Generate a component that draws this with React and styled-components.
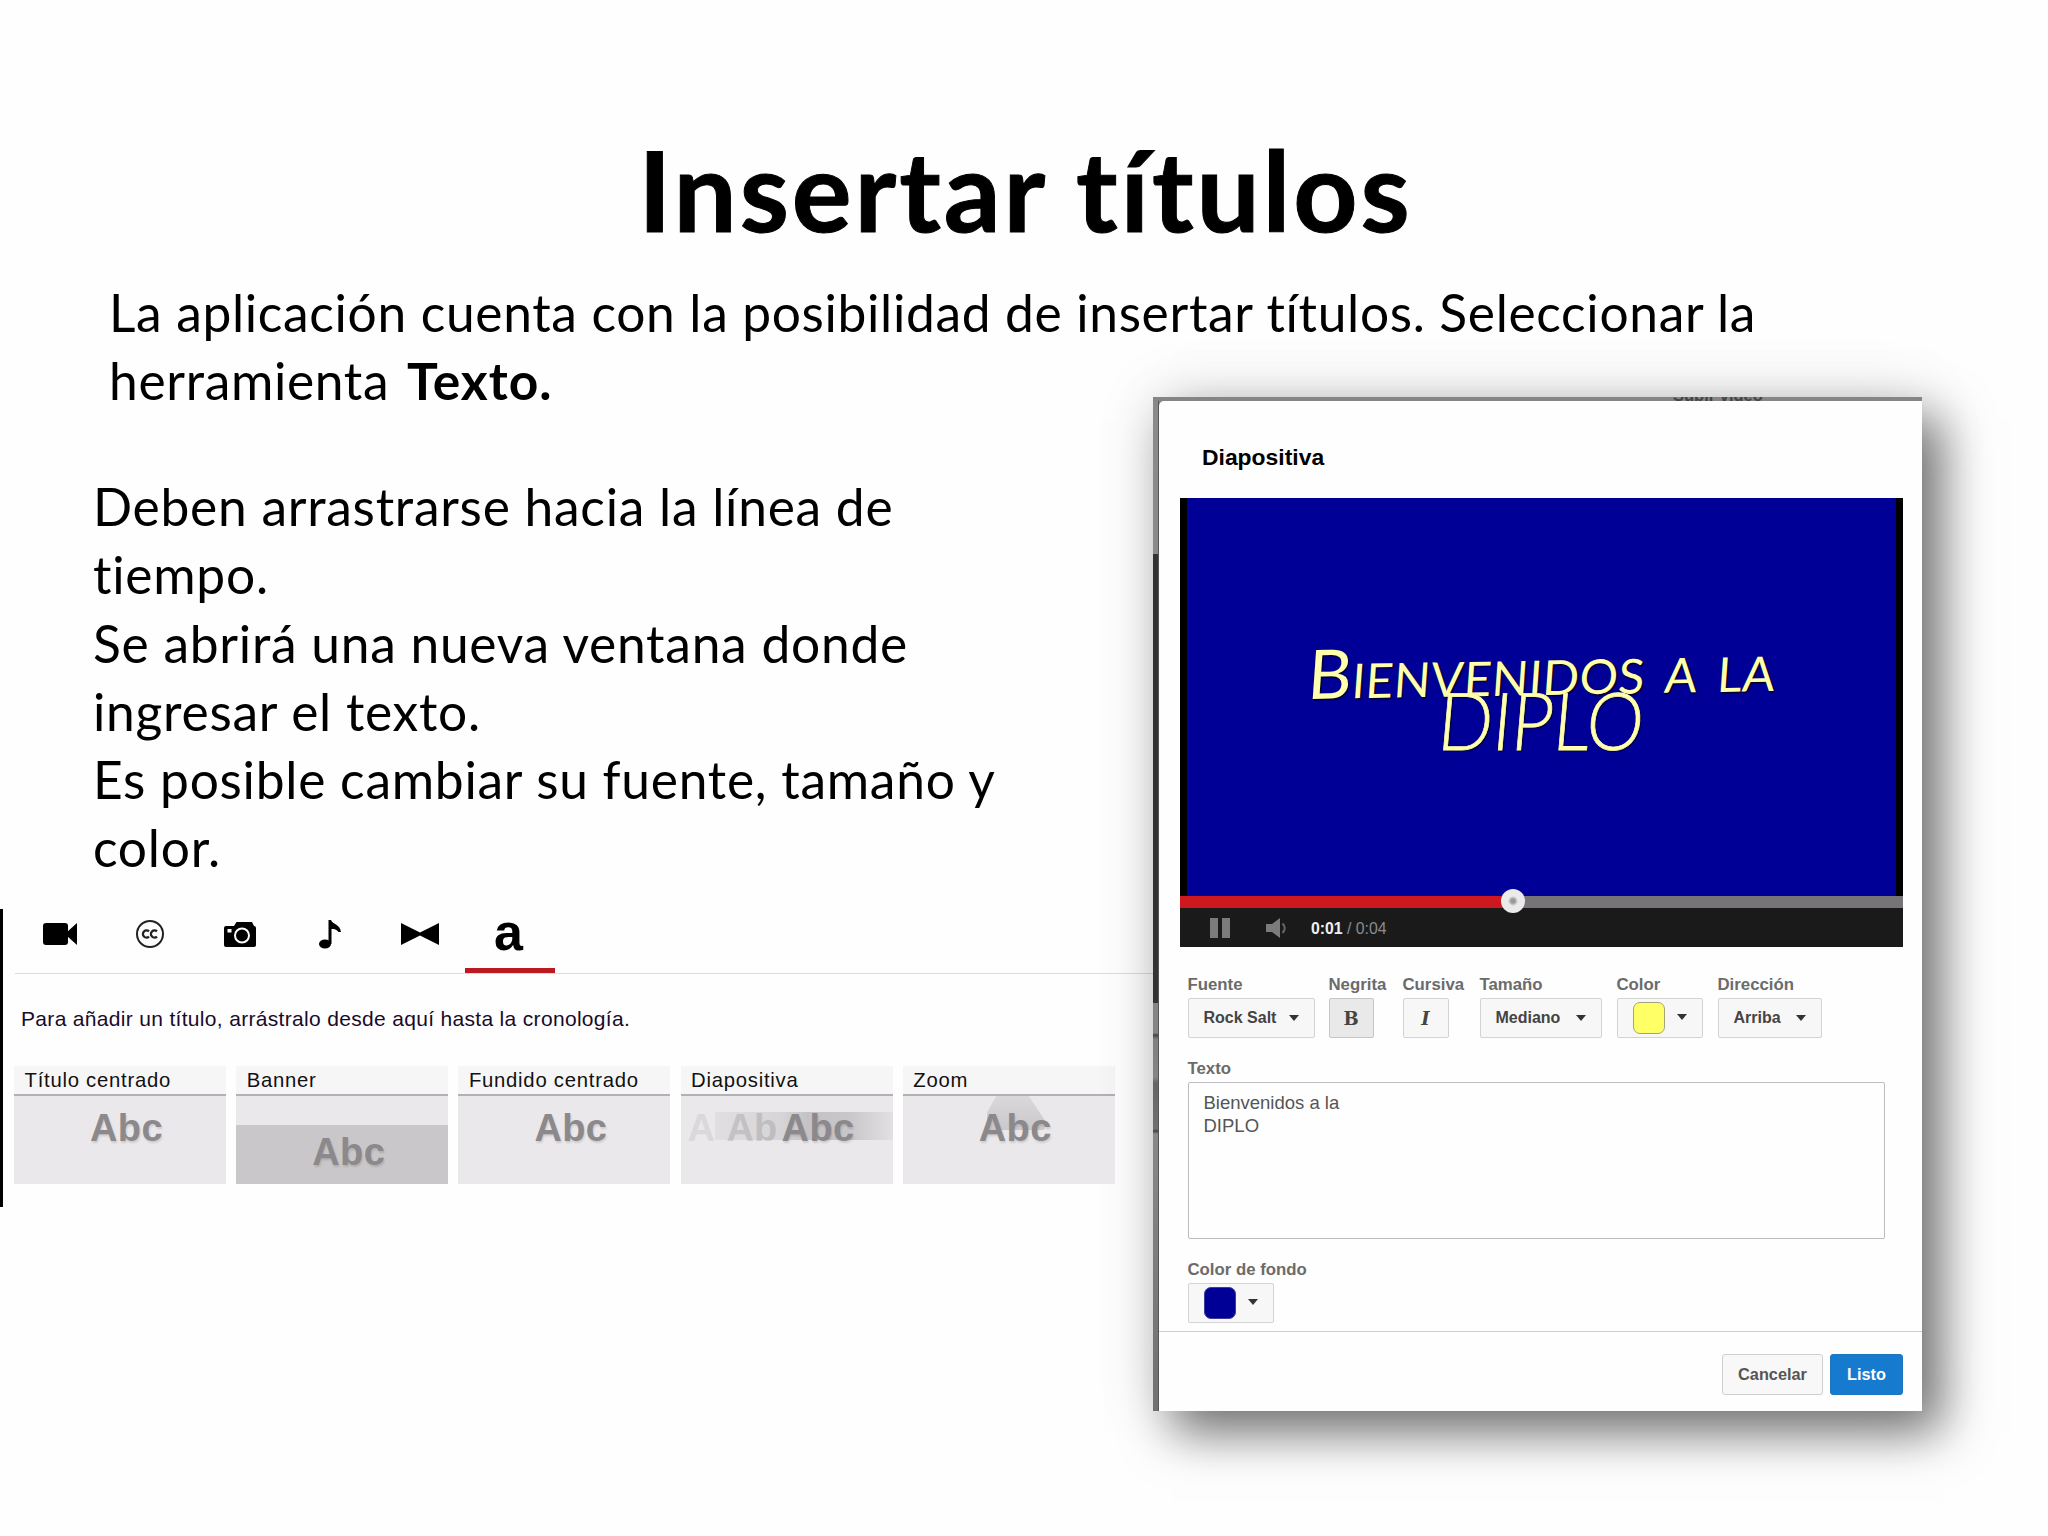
import React, { useState } from "react";
import styled, { createGlobalStyle } from "styled-components";

const tabs = ["video", "cc", "photo", "music", "transition", "text"];

const presets = [
  { name: "Título centrado", kind: "plain" },
  { name: "Banner", kind: "banner" },
  { name: "Fundido centrado", kind: "plain" },
  { name: "Diapositiva", kind: "slide" },
  { name: "Zoom", kind: "zoom" },
];

const TabIcon = ({ name }) => {
  switch (name) {
    case "video":
      return (
        <svg width="34" height="22" viewBox="0 0 34 22">
          <rect x="0" y="0" width="25" height="22" rx="3" />
          <path d="M24 9 L34 0 V22 L24 13 Z" />
        </svg>
      );
    case "cc":
      return (
        <svg width="30" height="30" viewBox="0 0 30 30" fill="none" stroke="#222">
          <circle cx="15" cy="15" r="13" strokeWidth="2" />
          <path d="M14 12.4 A3.6 3.6 0 1 0 14 17.6" strokeWidth="2.3" />
          <path d="M22 12.4 A3.6 3.6 0 1 0 22 17.6" strokeWidth="2.3" />
        </svg>
      );
    case "photo":
      return (
        <svg width="32" height="25" viewBox="0 0 32 25">
          <path d="M2 4 H10 L12.500 0 H28 L30 4 Q32 4 32 6 V23 Q32 25 30 25 H2 Q0 25 0 23 V6 Q0 4 2 4 Z" />
          <circle cx="18" cy="13.500" r="7" fill="none" stroke="#fff" strokeWidth="2" />
          <rect x="3.500" y="7" width="4" height="3.500" fill="#fff" />
        </svg>
      );
    case "music":
      return (
        <svg width="22" height="29" viewBox="0 0 22 29">
          <ellipse cx="6" cy="24" rx="6" ry="4.600" />
          <path d="M9.500 24 V0 H12 C13 4 21 4 22 12 H19.500 C18 9.500 15 9 12.500 9 V24 Z" />
        </svg>
      );
    case "transition":
      return (
        <svg width="38" height="22" viewBox="0 0 38 22">
          <path d="M0 0 L19 9.500 L38 0 V22 L19 12.500 L0 22 Z" />
        </svg>
      );
    default:
      return <Letter>a</Letter>;
  }
};

const Preview = ({ kind }) => (
  <PreviewBox $kind={kind}>
    {kind === "slide" && (
      <>
        <Streak />
        <Ghost $left={7} $opacity={0.1}>A</Ghost>
        <Ghost $left={46} $opacity={0.18}>Ab</Ghost>
      </>
    )}
    {kind === "zoom" && <Beam />}
    <Abc $kind={kind}>Abc</Abc>
  </PreviewBox>
);

const App = () => {
  const [active, setActive] = useState("text");
  const [text, setText] = useState("Bienvenidos a la\nDIPLO");
  const [bold, setBold] = useState(true);

  return (
    <Slide>
      <GlobalStyle />
      <Heading>Insertar títulos</Heading>
      <Intro>
        La aplicación cuenta con la posibilidad de insertar títulos. Seleccionar la
        <br />
        herramienta <b>Texto.</b>
      </Intro>

      <Columns>
        <Left>
          <Steps>
            Deben arrastrarse hacia la línea de
            <br />
            tiempo.
            <br />
            Se abrirá una nueva ventana donde
            <br />
            ingresar el texto.
            <br />
            Es posible cambiar su fuente, tamaño y
            <br />
            color.
          </Steps>

          {/* title presets */}
          <Panel>
            <TabBar>
              {tabs.map((tab) => (
                <Tab key={tab} $active={tab === active} onClick={() => setActive(tab)}>
                  <TabIcon name={tab} />
                </Tab>
              ))}
            </TabBar>
            <Hint>Para añadir un título, arrástralo desde aquí hasta la cronología.</Hint>
            <Cards>
              {presets.map((preset) => (
                <Card key={preset.name}>
                  <CardName>{preset.name}</CardName>
                  <Preview kind={preset.kind} />
                </Card>
              ))}
            </Cards>
          </Panel>
        </Left>

        <Window>
          {/* the page behind shows only as a thin strip */}
          <Backdrop>
            <BackdropText>Subir vídeo</BackdropText>
          </Backdrop>
          <WindowRow>
            <Edge />
            <Dialog>
              <DialogTitle>Diapositiva</DialogTitle>
              <Player>
                <Screen>
                  <Line1>Bienvenidos a la</Line1>
                  <Line2>DIPLO</Line2>
                </Screen>
                <Progress>
                  <Played />
                  <Knob />
                </Progress>
                <Controls>
                  <svg width="20" height="20" viewBox="0 0 20 20" fill="#7b7b7b">
                    <rect width="8" height="20" />
                    <rect x="12" width="8" height="20" />
                  </svg>
                  <svg width="21" height="20" viewBox="0 0 21 20" fill="#7b7b7b">
                    <path d="M0 6 H6 L14 0 V20 L6 14 H0 Z" />
                    <path d="M16.500 5.500 Q21 10 16.500 15" fill="none" stroke="#666" strokeWidth="2" />
                  </svg>
                  <Time>
                    <b>0:01</b> / 0:04
                  </Time>
                </Controls>
              </Player>

              <Form>
                <Fields>
                  <Field $width={141}>
                    <Label>Fuente</Label>
                    <Button $width={127}>
                      Rock Salt <Caret />
                    </Button>
                  </Field>
                  <Field $width={74}>
                    <Label>Negrita</Label>
                    <Button $width={45} $pressed={bold} $glyph onClick={() => setBold(!bold)}>
                      B
                    </Button>
                  </Field>
                  <Field $width={77}>
                    <Label>Cursiva</Label>
                    <Button $width={46} $glyph>
                      <i>I</i>
                    </Button>
                  </Field>
                  <Field $width={137}>
                    <Label>Tamaño</Label>
                    <Button $width={122}>
                      Mediano <Caret />
                    </Button>
                  </Field>
                  <Field $width={101}>
                    <Label>Color</Label>
                    <Button $width={86}>
                      <Swatch $color="#ffff66" $edge="#a5a37a" />
                      <Caret $raised />
                    </Button>
                  </Field>
                  <Field $width={104}>
                    <Label>Dirección</Label>
                    <Button $width={104}>
                      Arriba <Caret />
                    </Button>
                  </Field>
                </Fields>
                <Label>Texto</Label>
                <TextArea value={text} onChange={(e) => setText(e.target.value)} spellCheck={false} />
                <Label>Color de fondo</Label>
                <Button $width={86}>
                  <Swatch $color="#000096" $edge="#3c3c9c" />
                  <Caret $raised />
                </Button>
              </Form>

              <Footer>
                <Action $width={101}>Cancelar</Action>
                <Action $width={73} $primary>
                  Listo
                </Action>
              </Footer>
            </Dialog>
          </WindowRow>
        </Window>
      </Columns>
    </Slide>
  );
};

const GlobalStyle = createGlobalStyle`
  * {
    box-sizing: border-box;
  }
  body {
    margin: 0;
    background: #fefefe;
  }
  button, textarea {
    margin: 0;
    padding: 0;
    border: none;
    border-radius: 0;
    background: none;
    font-family: inherit;
  }
`;

const Slide = styled.div`
  width: 2048px;
  height: 1536px;
  padding-top: 122px;
  overflow: hidden;
  color: #000;
  background: #fefefe;
  font-family: "Liberation Sans", Arial, sans-serif;
`;
const Heading = styled.h1`
  margin: 0;
  padding-left: 3px;
  text-align: center;
  font-family: Lato, sans-serif;
  font-size: 112px;
  font-weight: 700;
  letter-spacing: 2.9px;
  line-height: 134px;
  height: 156px;
  font-variant-ligatures: none;
  -webkit-text-stroke: 1px #000;
`;
const Intro = styled.p`
  margin: 0;
  padding-left: 109px;
  height: 136px;
  white-space: nowrap;
  font-family: Lato, sans-serif;
  font-size: 51.5px;
  letter-spacing: 0.66px;
  line-height: 68px;
  font-variant-ligatures: none;

  b {
    letter-spacing: 1px;
    margin-left: 4px;
  }
`;
const Columns = styled.div`
  display: flex;
  align-items: flex-start;
`;
const Left = styled.div`
  width: 1153px;
  flex: none;
  padding-top: 58px;
`;
const Steps = styled.p`
  margin: 0;
  padding-left: 93px;
  height: 437px;
  white-space: nowrap;
  font-family: Lato, sans-serif;
  font-size: 51.5px;
  letter-spacing: 0.74px;
  line-height: 68.3px;
  font-variant-ligatures: none;
`;

const Panel = styled.section`
  height: 298px;
  border-left: 3.5px solid #000;
`;
const TabBar = styled.div`
  display: flex;
  height: 65px;
  margin-left: 12px;
  border-bottom: 1px solid #dcdcdc;
`;
const Tab = styled.button`
  display: flex;
  align-items: center;
  justify-content: center;
  width: 90px;
  height: 64px;
  padding-bottom: 9px;
  border-bottom: ${(props) => (props.$active ? "5px solid #b9191f" : "5px solid transparent")};
`;
const Letter = styled.span`
  margin-top: -4px;
  margin-left: -3px;
  font-size: 52px;
  font-weight: 700;
  line-height: 60px;
`;
const Hint = styled.div`
  padding: 33px 0 0 18px;
  height: 92px;
  white-space: nowrap;
  font-size: 21px;
  letter-spacing: 0.32px;
  line-height: 24px;
  color: #1a0a2a;
`;
const Cards = styled.div`
  display: flex;
  gap: 10.2px;
  padding-left: 11px;
`;
const Card = styled.div`
  width: 212px;
  height: 118px;
`;
const CardName = styled.div`
  height: 30px;
  padding: 1px 0 0 10.5px;
  border-bottom: 2px solid #b3b1b3;
  background: #f7f6f7;
  white-space: nowrap;
  font-size: 20.3px;
  letter-spacing: 0.75px;
  line-height: 26px;
  color: #111;
`;
const PreviewBox = styled.div`
  position: relative;
  height: 88px;
  overflow: hidden;
  background: ${(props) =>
    props.$kind === "banner" ? "linear-gradient(#eae8ea 29px, #c9c7c9 29px)" : "#eae8ea"};
`;
const Abc = styled.div`
  position: relative;
  padding-top: ${(props) => (props.$kind === "banner" ? 34 : 10)}px;
  padding-left: ${(props) => (props.$kind === "slide" ? 101 : 76)}px;
  font-size: 38px;
  font-weight: 700;
  letter-spacing: 0.4px;
  line-height: 44px;
  color: #8b898b;
  text-shadow: 1px 2px 2px rgba(0, 0, 0, 0.12);
`;
const Ghost = styled.span`
  position: absolute;
  top: 10px;
  left: ${(props) => props.$left}px;
  opacity: ${(props) => props.$opacity};
  font-size: 38px;
  font-weight: 700;
  line-height: 44px;
  color: #555;
`;
const Streak = styled.div`
  position: absolute;
  top: 16px;
  left: 34px;
  right: 0;
  height: 28px;
  background: linear-gradient(90deg, #e0dee0, #d6d4d6 38%, #c4c2c4 52%, #c8c6c8 75%, #e2e0e2);
`;
const Beam = styled.div`
  position: absolute;
  top: 0;
  left: 84px;
  width: 60px;
  height: 34px;
  background: linear-gradient(#dad8da, #cac8ca);
  clip-path: polygon(16% 0, 70% 0, 100% 80%, 95% 100%, 0 100%, 0 50%);
`;

const Window = styled.div`
  width: 769px;
  height: 1014px;
  margin-top: -17px;
  box-shadow: 20px 22px 46px rgba(0, 0, 0, 0.52), 2px 0 60px rgba(0, 0, 0, 0.12);
`;
const Backdrop = styled.div`
  display: flex;
  align-items: flex-end;
  height: 4px;
  overflow: hidden;
  background: #858585;
`;
const BackdropText = styled.span`
  margin-left: 520px;
  font-size: 16.5px;
  font-weight: 700;
  line-height: 12px;
  color: #444;
`;
const WindowRow = styled.div`
  display: flex;
  height: 1010px;
  background: #858585;
`;
const Edge = styled.div`
  width: 6px;
  background: linear-gradient(
    #8a8a8a 153px,
    #333 153px,
    #333 602px,
    #858585 602px,
    #858585 632px,
    #444 634px,
    #827f7c 638px,
    #858585 676px,
    #666 682px,
    #707070 728px,
    #444 730px,
    #888 733px,
    #707070
  );
  border-right: 1px solid #555;
`;
const Dialog = styled.div`
  flex: 1;
  display: flex;
  flex-direction: column;
  border-top-left-radius: 5px;
  background: #fefefe;
`;
const DialogTitle = styled.div`
  height: 97px;
  padding: 42px 0 0 43px;
  font-size: 22.9px;
  font-weight: 700;
  line-height: 28px;
`;
const Player = styled.div`
  width: 723px;
  margin-left: 21px;
`;
const Screen = styled.div`
  height: 398px;
  padding-top: 131px;
  border: solid #000;
  border-width: 0 7px;
  background: #000096;
  color: #ffffae;
  text-align: center;
  white-space: nowrap;
  font-family: "Rock Salt", Lato, cursive;
  text-shadow: 1px 1px 2px #000;
`;
const Line1 = styled.div`
  height: 55px;
  padding-left: 3px;
  font-size: 68px;
  font-variant: small-caps;
  letter-spacing: 0.4px;
  word-spacing: 2px;
  line-height: 80px;
  transform: rotate(-1deg) skewX(-5deg);
`;
const Line2 = styled.div`
  font-size: 80px;
  font-weight: 300;
  line-height: 71px;
  transform: skewX(-5deg) scaleX(0.9);
  -webkit-text-stroke: 0.8px #ffffae;
`;
const Progress = styled.div`
  position: relative;
  height: 12px;
  background: #767476;
`;
const Played = styled.div`
  width: 332px;
  height: 12px;
  background: #cc181e;
`;
const Knob = styled.div`
  position: absolute;
  top: -7px;
  left: 321px;
  width: 24px;
  height: 24px;
  border-radius: 50%;
  background: radial-gradient(circle, #999 2px, #eaeaea 5px);
`;
const Controls = styled.div`
  display: flex;
  align-items: center;
  height: 39px;
  padding-left: 30px;
  gap: 36px;
  background: #1b1a1b;
`;
const Time = styled.span`
  margin-left: -12px;
  padding-top: 2px;
  font-size: 15.8px;
  color: #8b8b8b;

  b {
    color: #f0f0f0;
  }
`;
const Form = styled.div`
  flex: 1;
  padding: 28px 0 0 28.5px;
`;
const Fields = styled.div`
  display: flex;
  height: 84px;
`;
const Field = styled.div`
  width: ${(props) => props.$width}px;
`;
const Label = styled.div`
  height: 23px;
  white-space: nowrap;
  font-size: 16.8px;
  font-weight: 700;
  line-height: 20px;
  color: #6b6b6b;
`;
const Button = styled.button`
  display: flex;
  align-items: center;
  justify-content: space-between;
  width: ${(props) => props.$width}px;
  height: 40px;
  padding: 0 15px 0 15px;
  border: 1px solid ${(props) => (props.$pressed ? "#c6c6c6" : "#d3d3d3")};
  border-radius: 2px;
  background: ${(props) => (props.$pressed ? "#e9e9e9" : "#f8f7f8")};
  font-size: 16px;
  font-weight: 700;
  color: #444;
  white-space: nowrap;

  ${(props) =>
    props.$glyph &&
    `
    padding: 0;
    justify-content: center;
    font-family: "DejaVu Serif", serif;
    font-size: 18px;
  `}
`;
const Caret = styled.span`
  margin-top: ${(props) => (props.$raised ? -3 : 0)}px;
  border: 5.5px solid transparent;
  border-top: 6px solid #333;
  border-bottom: none;
`;
const Swatch = styled.span`
  width: 32px;
  height: 32px;
  border: 1px solid ${(props) => props.$edge};
  border-radius: 7px;
  background: ${(props) => props.$color};
`;
const TextArea = styled.textarea`
  display: block;
  width: 697px;
  height: 157px;
  margin-bottom: 21px;
  padding: 9px 15px;
  border: 1px solid #bdbbbd;
  border-radius: 2px;
  resize: none;
  overflow: hidden;
  outline: none;
  font-size: 18.5px;
  line-height: 22.5px;
  color: #555;
`;
const Footer = styled.div`
  display: flex;
  gap: 7px;
  justify-content: flex-end;
  height: 80px;
  padding: 22px 19px 0 0;
  border-top: 1px solid #cfcdcf;
`;
const Action = styled.button`
  width: ${(props) => props.$width}px;
  height: 41px;
  padding-bottom: 1px;
  border: 1px solid ${(props) => (props.$primary ? "#1b76bd" : "#d0ced0")};
  border-radius: 3px;
  background: ${(props) => (props.$primary ? "#167bce" : "#f9f8f9")};
  font-size: 16.3px;
  font-weight: 700;
  color: ${(props) => (props.$primary ? "#fff" : "#555")};
`;

export default App;
